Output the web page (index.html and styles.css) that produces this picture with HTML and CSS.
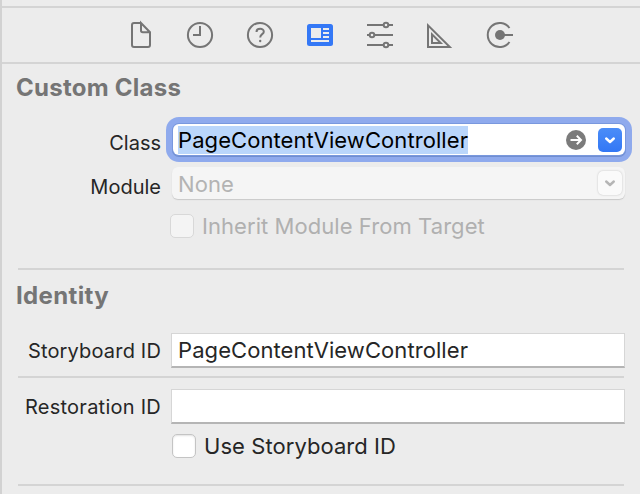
FILE: index.html
```html
<!DOCTYPE html>
<html lang="en">
<head>
<meta charset="utf-8">
<title>Identity Inspector</title>
<link rel="stylesheet" href="styles.css">
</head>
<body>
<main class="inspector">
  <nav class="tabs">
    <svg class="tab" viewBox="0 0 60 54"><path d="M31 14H24a2 2 0 0 0-2 2V36a2 2 0 0 0 2 2H38a2 2 0 0 0 2-2V23.200L31 14V21.500a1.800 1.800 0 0 0 1.800 1.800H40"/></svg>
    <svg class="tab" viewBox="0 0 60 54"><circle cx="30" cy="26" r="12.100"/><path d="M30 17V26H23"/></svg>
    <svg class="tab" viewBox="0 0 60 54"><circle cx="30" cy="26" r="12.100"/><path d="M26.500 22.900C26.500 18.900 33.800 18.800 33.800 22.700C33.800 25.300 30.200 25.100 30.200 28.500"/><circle class="solid" cx="30.200" cy="32" r="1.200"/></svg>
    <svg class="tab selected" viewBox="0 0 60 54"><rect class="solid" x="17" y="15" width="26" height="22" rx="2.500"/><path class="cutout" d="M21 19h10v10H21zM33 19h6v2h-6zM33 23h6v2h-6zM33 27h6v2h-6zM21 31h18v2H21z"/></svg>
    <svg class="tab" viewBox="0 0 60 54"><path d="M17 16H33.500M38.500 16H43M17 26H19.500M24.500 26H43M17 36H33.500M38.500 36H43"/><circle cx="36" cy="16" r="2.300"/><circle cx="22" cy="26" r="2.300"/><circle cx="36" cy="36" r="2.300"/></svg>
    <svg class="tab" viewBox="0 0 60 54"><path d="M18 16.300V38H39.800ZM22 25.300V34H30.700Z"/></svg>
    <svg class="tab" viewBox="0 0 60 54"><path d="M39.500 19A12 12 0 1 0 39.500 33M30 26H43"/><circle class="solid" cx="30" cy="26" r="5"/></svg>
  </nav>

  <section class="section custom-class">
    <h2 class="heading">Custom Class</h2>
    <div class="row">
      <span class="label class-label">Class</span>
      <div class="combo focused">
        <span class="value"><mark class="selection">PageContentViewController</mark></span>
        <svg class="jump" viewBox="0 0 20 20"><circle cx="10" cy="10" r="10"/><path d="M4.500 10H15M10.800 5.800L15 10L10.800 14.200"/></svg>
        <span class="disclosure"><svg viewBox="0 0 24 24"><path d="M8.200 10.500L12 14L15.800 10.500"/></svg></span>
      </div>
    </div>
    <div class="row module-row">
      <span class="label module-label">Module</span>
      <div class="combo disabled">
        <span class="value none">None</span>
        <span class="disclosure"><svg viewBox="0 0 24 24"><path d="M8.200 10.500L12 14L15.800 10.500"/></svg></span>
      </div>
    </div>
    <div class="check-row inherit-row"><span class="checkbox"></span><span class="inherit">Inherit Module From Target</span></div>
  </section>

  <section class="section identity">
    <h2 class="heading identity-heading">Identity</h2>
    <div class="row field-row">
      <span class="label storyboard-label">Storyboard ID</span>
      <div class="field"><span class="value">PageContentViewController</span></div>
    </div>
    <div class="rule"></div>
    <div class="row field-row">
      <span class="label restoration-label">Restoration ID</span>
      <div class="field"></div>
    </div>
    <div class="check-row use-row"><span class="checkbox"></span><span class="use">Use Storyboard ID</span></div>
  </section>
  <div class="rule"></div>
</main>
</body>
</html>
```
FILE: styles.css
```css
* { box-sizing: border-box; }

body {
  margin: 0;
  background: #ececec;
  color: #262626;
  font-family: Inter, "Liberation Sans", sans-serif;
  font-size: 22px;
}

.inspector {
  height: 494px;
  padding-top: 6px;
  border-left: 2px solid #d2d2d2;
  overflow: hidden;
}

.tabs {
  display: flex;
  height: 58px;
  padding-left: 108px;
  border-top: 2px solid #d4d4d4;
  border-bottom: 2px solid #d4d4d4;
}

.tab {
  width: 60px;
  height: 54px;
  margin-top: 1px;
  fill: none;
  stroke: #757575;
  stroke-width: 2;
}

.tab .solid { fill: #757575; stroke: none; }
.tab.selected .solid { fill: #3478f6; }
.tab .cutout { fill: #ececec; stroke: none; }

.section { display: flex; flex-direction: column; }

.custom-class { height: 204px; padding-top: 8px; }

.identity {
  height: 216px;
  padding-top: 12px;
}

.identity::before {
  content: "";
  height: 2px;
  margin: -12px 16px 10px;
  background: #d4d4d4;
}

.heading {
  height: 32px;
  margin: 0 0 20px 14px;
  color: #757575;
  font-size: 24px;
  font-weight: 700;
  line-height: 32px;
  letter-spacing: 0.25px;
}

.identity-heading { margin-bottom: 21px; letter-spacing: 0.35px; }

.row {
  display: grid;
  grid-template-columns: 159px 453px;
  column-gap: 11px;
  align-items: center;
  height: 30px;
}

.module-row { height: 32px; margin-top: 13px; }

.label {
  justify-self: end;
  font-size: 20px;
  line-height: 24px;
  white-space: nowrap;
}

.class-label { margin-top: 7px; }
.module-label { margin-top: 8px; }
.storyboard-label { letter-spacing: 0.17px; }
.restoration-label { letter-spacing: 0.25px; }

.combo {
  display: flex;
  align-items: center;
  height: 100%;
  padding: 0 3px 0 5px;
  border-radius: 6px;
}

.focused {
  margin-left: 1px;
  background: #fff;
  color: #000;
  box-shadow: 0 0 0 1px #7998de, 0 1px 0 1px #718ed0, 0 0 0 7px #8faaed;
}

.disabled {
  padding-left: 6px;
  background: #f5f5f5;
  box-shadow: 0 1px 1px #c9c9c9;
  color: #b3b3b3;
}

.value { flex: 1; letter-spacing: 0.08px; white-space: nowrap; }
.none { padding-top: 2px; }

.selection {
  display: inline-block;
  height: 28px;
  line-height: 28px;
  background: #bad6fb;
  color: #000;
}

.jump { width: 20px; height: 20px; margin-right: 12px; fill: #7b7b7b; }
.jump path { fill: none; stroke: #fff; stroke-width: 2; }

.disclosure {
  width: 24px;
  height: 24px;
  border-radius: 5px;
  background: linear-gradient(#4b8df8, #3277f5);
}

.disabled .disclosure { background: #fafafa; box-shadow: 0 0 2px #bdbdbd; }
.disclosure svg { display: block; fill: none; stroke: #fff; stroke-width: 2.4; stroke-linecap: round; stroke-linejoin: round; }
.disabled .disclosure svg { stroke: #b5b5b5; }

.check-row {
  display: flex;
  align-items: center;
  gap: 8px;
  height: 24px;
  letter-spacing: 0.06px;
  white-space: nowrap;
}

.checkbox {
  width: 24px;
  height: 24px;
  border: 1px solid #c4c4c4;
  border-radius: 5px;
  background: #fff;
  box-shadow: inset 0 1px 2px #e2e2e2;
}

.inherit-row { margin: 15px 0 0 168px; color: #b0b0b0; }
.inherit-row .checkbox { border-color: #d8d8d8; background: #f4f4f4; box-shadow: none; }
.use-row { margin: 10px 0 0 170px; }

.field-row { height: 35px; grid-template-columns: 159px 454px; column-gap: 10px; }

.field {
  display: flex;
  align-items: center;
  height: 35px;
  padding-left: 6px;
  border: 1px solid #d6d6d6;
  border-bottom: 2px solid #b5b5b5;
  background: #fff;
}

.rule { height: 2px; margin: 0 16px; flex: none; background: #d4d4d4; }
.identity .rule { margin: 8px 16px 11px; }
```
